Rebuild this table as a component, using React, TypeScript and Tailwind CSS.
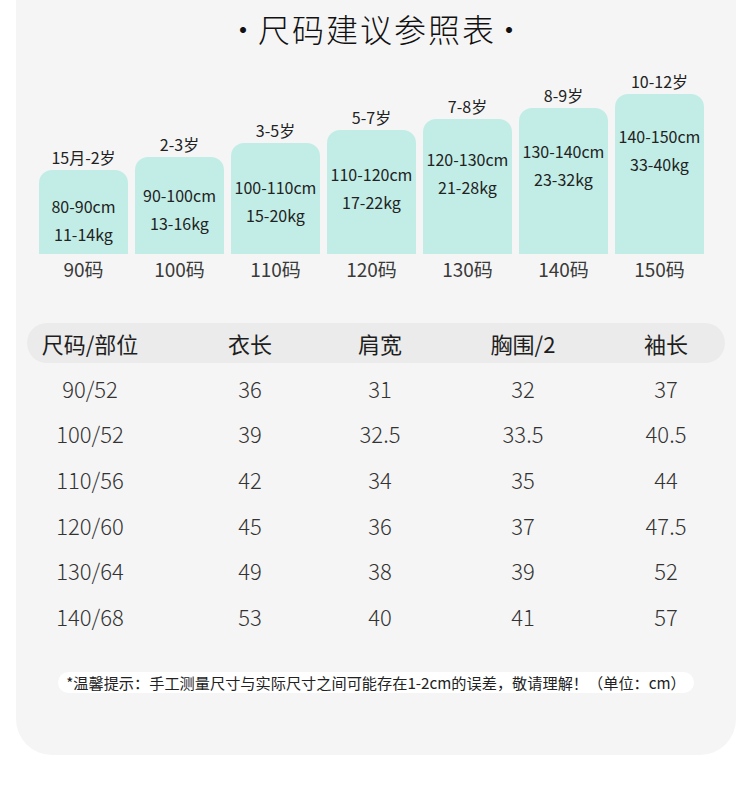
import React from "react";

const bars = [
  { age: "15月-2岁", h: "h-[84px]", pt: "pt-[22px]", cm: "80-90cm", kg: "11-14kg", size: "90码" },
  { age: "2-3岁", h: "h-[97px]", pt: "pt-[24px]", cm: "90-100cm", kg: "13-16kg", size: "100码" },
  { age: "3-5岁", h: "h-[111px]", pt: "pt-[30px]", cm: "100-110cm", kg: "15-20kg", size: "110码" },
  { age: "5-7岁", h: "h-[124px]", pt: "pt-[30px]", cm: "110-120cm", kg: "17-22kg", size: "120码" },
  { age: "7-8岁", h: "h-[135px]", pt: "pt-[26px]", cm: "120-130cm", kg: "21-28kg", size: "130码" },
  { age: "8-9岁", h: "h-[146px]", pt: "pt-[29px]", cm: "130-140cm", kg: "23-32kg", size: "140码" },
  { age: "10-12岁", h: "h-[160px]", pt: "pt-[28px]", cm: "140-150cm", kg: "33-40kg", size: "150码" },
];

const rows = [
  ["90/52", "36", "31", "32", "37"],
  ["100/52", "39", "32.5", "33.5", "40.5"],
  ["110/56", "42", "34", "35", "44"],
  ["120/60", "45", "36", "37", "47.5"],
  ["130/64", "49", "38", "39", "52"],
  ["140/68", "53", "40", "41", "57"],
];

const headers = ["尺码/部位", "衣长", "肩宽", "胸围/2", "袖长"];

export default function App() {
  return (
    <div className="w-[750px] min-h-[797px] bg-white font-['Noto_Sans_CJK_SC',sans-serif]">
      <div className="ml-[16px] w-[720px] bg-[#f5f5f5] rounded-b-[36px] pb-[62px]">
        <div className="pt-[8px] h-[52px] flex justify-center items-start text-[32px] leading-[40px] font-light text-[#111]">
          <span className="mr-[-1px]">·</span>
          <span className="tracking-[2px] mr-[-2px]">尺码建议参照表</span>
          <span className="ml-[-1px]">·</span>
        </div>

        <div className="h-[229px] flex items-end gap-[7px] pl-[23px]">
          {bars.map((b) => (
            <div key={b.size} className="w-[89px] flex flex-col items-center">
              <div className="text-[16px] leading-[20px] mb-[3px] text-[#222]">{b.age}</div>
              <div className={`w-full ${b.h} ${b.pt} bg-[#c1ede6] rounded-t-[13px] flex flex-col items-center text-[16px] leading-[28px] text-[#222]`}>
                <div>{b.cm}</div>
                <div>{b.kg}</div>
              </div>
              <div className="mt-[3px] text-[19px] leading-[24px] text-[#3a3a3a]">{b.size}</div>
            </div>
          ))}
        </div>

        <div className="mt-[42px] mx-[11px]">
          <div className="h-[40px] rounded-[20px] bg-[#ebebeb] grid grid-cols-[126px_194px_66px_220px_66px] items-center text-[22px] leading-[30px] text-[#1e1e1e]">
            {headers.map((h) => (
              <div key={h} className="text-center whitespace-nowrap">{h}</div>
            ))}
          </div>
          <div className="mt-[2px]">
            {rows.map((r) => (
              <div key={r[0]} className="h-[45.6px] grid grid-cols-[126px_194px_66px_220px_66px] items-center text-[22px] leading-[30px] font-light text-[#333]">
                {r.map((c, i) => (
                  <div key={i} className="text-center whitespace-nowrap">{c}</div>
                ))}
              </div>
            ))}
          </div>
        </div>

        <div className="mt-[33px] flex justify-center">
          <div className="bg-white rounded-full h-[21px] px-[8px] flex items-center text-[15.2px] leading-[21px] text-[#222] whitespace-nowrap">
            *温馨提示：手工测量尺寸与实际尺寸之间可能存在1-2cm的误差，敬请理解！（单位：cm）
          </div>
        </div>
      </div>
    </div>
  );
}
